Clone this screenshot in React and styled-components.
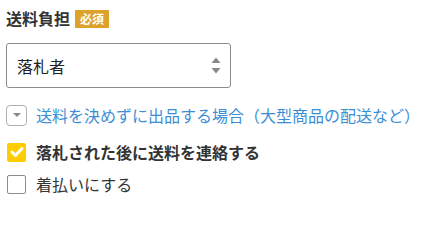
import React from "react";
import styled, { createGlobalStyle } from "styled-components";

const GlobalStyle = createGlobalStyle`
  body {
    margin: 0;
    background: #fff;
    font-family: "Noto Sans CJK JP", "Noto Sans", sans-serif;
    color: #333;
  }
`;

const Wrap = styled.div`
  padding: 9px 6px 0;
  width: 415px;
`;

const Heading = styled.div`
  display: flex;
  align-items: center;
  gap: 5px;
  height: 19px;
`;

const Label = styled.span`
  font-size: 16px;
  font-weight: 700;
  color: #333;
  line-height: 19px;
`;

const Badge = styled.span`
  background: #dca22c;
  color: #fff;
  font-size: 12px;
  font-weight: 700;
  line-height: 18px;
  padding: 0 5px;
  border-radius: 1px;
`;

const SelectBox = styled.div`
  margin-top: 15px;
  width: 225px;
  height: 45px;
  box-sizing: border-box;
  border: 1px solid #8c8c8c;
  border-radius: 3px;
  display: flex;
  align-items: center;
  justify-content: space-between;
  padding: 0 9px 0 10px;
  font-size: 16px;
  color: #222;
`;

const Arrows = styled.svg`
  width: 10px;
  height: 17px;
`;

const Toggle = styled.div`
  display: flex;
  align-items: center;
  gap: 9px;
  margin-top: 16px;
  color: #3b8ed6;
  font-size: 16px;
  line-height: 22px;
`;

const ToggleIcon = styled.span`
  width: 21px;
  height: 21px;
  box-sizing: border-box;
  border: 1px solid #b0b0b0;
  border-radius: 4px;
  display: flex;
  align-items: center;
  justify-content: center;
`;

const CheckRow = styled.label`
  display: flex;
  align-items: center;
  gap: 10px;
  margin-top: ${(p) => p.$gap}px;
  font-size: 16px;
  line-height: 22px;
  font-weight: ${(p) => (p.$checked ? 700 : 400)};
  color: #333;
`;

const Box = styled.span`
  width: 19px;
  height: 19px;
  box-sizing: border-box;
  border-radius: 2px;
  border: 1px solid ${(p) => (p.$checked ? "#ffcc00" : "#8c8c8c")};
  background: ${(p) => (p.$checked ? "#ffcc00" : "#fff")};
  display: flex;
  align-items: center;
  justify-content: center;
  margin-left: 1px;
`;

const Check = ({ checked, gap, children }) => (
  <CheckRow $checked={checked} $gap={gap}>
    <Box $checked={checked}>
      {checked && (
        <svg width="14" height="12" viewBox="0 0 14 12">
          <path d="M2 6 L5.5 9.5 L12 2.5" fill="none" stroke="#fff" strokeWidth="3" strokeLinecap="round" strokeLinejoin="round" />
        </svg>
      )}
    </Box>
    {children}
  </CheckRow>
);

export default function App() {
  return (
    <>
      <GlobalStyle />
      <Wrap>
        <Heading>
          <Label>送料負担</Label>
          <Badge>必須</Badge>
        </Heading>
        <SelectBox>
          <span>落札者</span>
          <Arrows viewBox="0 0 10 17">
            <path d="M0.5 6 L5 0.5 L9.5 6 Z" fill="#8a8a8a" />
            <path d="M0.5 11 L5 16.5 L9.5 11 Z" fill="#8a8a8a" />
          </Arrows>
        </SelectBox>
        <Toggle>
          <ToggleIcon>
            <svg width="10" height="6" viewBox="0 0 10 6">
              <path d="M1 1 L5 5 L9 1 Z" fill="#888" />
            </svg>
          </ToggleIcon>
          送料を決めずに出品する場合（大型商品の配送など）
        </Toggle>
        <Check checked gap={15}>落札された後に送料を連絡する</Check>
        <Check gap={10}>着払いにする</Check>
      </Wrap>
    </>
  );
}
